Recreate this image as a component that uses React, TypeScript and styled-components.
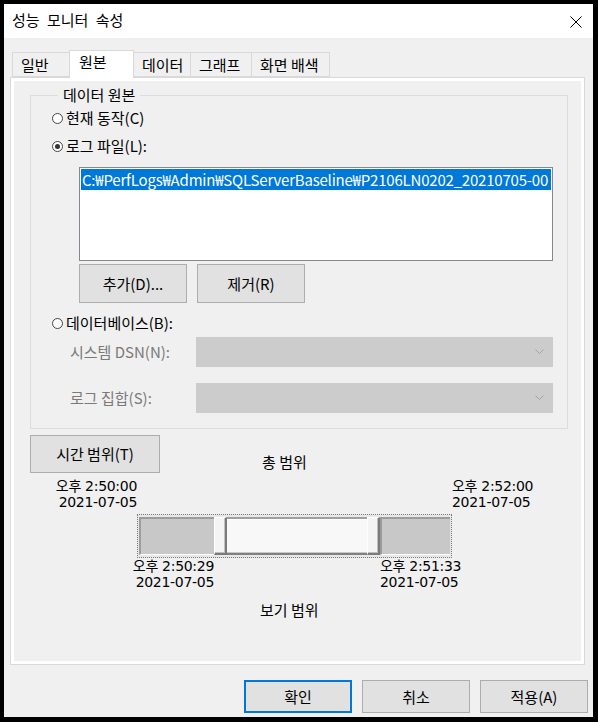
import React from "react";
import styled, { createGlobalStyle } from "styled-components";

const GlobalStyle = createGlobalStyle`
  html, body { margin: 0; padding: 0; background: #000; }
  body {
    font-family: "Noto Sans CJK KR", "Noto Sans", sans-serif;
    font-size: 15px;
    color: #000;
  }
  #root {
    box-sizing: border-box;
    width: 598px;
    height: 722px;
    padding: 4px 5px 5px 4px;
  }
  * { box-sizing: border-box; }
`;

const Window = styled.div`
  width: 589px;
  height: 713px;
  background: #f0f0f0;
  display: flex;
  flex-direction: column;
  overflow: hidden;
`;

const TitleBar = styled.div`
  height: 34px;
  background: #fff;
  display: flex;
  align-items: center;
  justify-content: space-between;
  padding: 0 11px 2px 8px;
  flex: none;
`;

const Title = styled.div`
  font-size: 15px;
  line-height: 20px;
  word-spacing: 4px;
`;

const CloseIcon = styled.svg`
  width: 12px;
  height: 12px;
  margin-top: 3px;
`;

const Content = styled.div`
  padding: 0 8px 0 6px;
  display: flex;
  flex-direction: column;
`;

const TabStrip = styled.div`
  display: flex;
  align-items: flex-end;
  height: 27px;
  margin: 12px 0 0 2px;
`;

const Tab = styled.div<{ $w: number; $selected?: boolean }>`
  width: ${(p) => p.$w}px;
  height: ${(p) => (p.$selected ? 28 : 25)}px;
  margin-bottom: ${(p) => (p.$selected ? -1 : 0)}px;
  position: relative;
  z-index: ${(p) => (p.$selected ? 2 : 1)};
  background: ${(p) => (p.$selected ? "#fff" : "#f0f0f0")};
  border: 1px solid #d9d9d9;
  border-bottom: ${(p) => (p.$selected ? "none" : "1px solid #d9d9d9")};
  margin-left: -1px;
  padding: ${(p) => (p.$selected ? "1px 0 0 9px" : "2px 0 0 8px")};
  line-height: 20px;
  font-size: 15px;
  white-space: nowrap;
  &:first-child { margin-left: 0; }
`;

const Page = styled.div`
  height: 588px;
  border: 1px solid #d9d9d9;
  box-shadow: inset 0 0 0 3px #fff;
  background: #f0f0f0;
  padding: 8px 0 0 19px;
  display: flex;
  flex-direction: column;
`;

const GroupBox = styled.fieldset`
  width: 538px;
  min-width: 0;
  margin: 0;
  border: 1px solid #dcdcdc;
  padding: 4px 14px 15px 21px;
  display: flex;
  flex-direction: column;
`;

const Legend = styled.legend`
  padding: 0 5px;
  margin-left: 6px;
  line-height: 18px;
  font-size: 15px;
`;

const RadioRow = styled.label<{ $mt: number }>`
  display: flex;
  align-items: center;
  height: 20px;
  margin-top: ${(p) => p.$mt}px;
  gap: 3px;
  line-height: 20px;
  color: #000;
`;

const RadioDot = styled.span<{ $checked?: boolean }>`
  width: 11px;
  height: 11px;
  border-radius: 50%;
  border: 1px solid #444;
  background: #fff;
  display: flex;
  align-items: center;
  justify-content: center;
  flex: none;
  &::after {
    content: "";
    width: 5px;
    height: 5px;
    border-radius: 50%;
    background: ${(p) => (p.$checked ? "#333" : "transparent")};
  }
`;

const ListBox = styled.div`
  margin: 11px 0 0 27px;
  width: 474px;
  height: 94px;
  border: 1px solid #828790;
  background: #fff;
  padding: 1px;
  overflow: hidden;
`;

const ListItem = styled.div<{ $selected?: boolean }>`
  height: 21px;
  line-height: 21px;
  padding-left: 1px;
  white-space: nowrap;
  overflow: hidden;
  letter-spacing: -0.2px;
  background: ${(p) => (p.$selected ? "#0078d7" : "transparent")};
  color: ${(p) => (p.$selected ? "#fff" : "#000")};
  font-size: 15px;
`;

const ButtonRow = styled.div`
  display: flex;
  gap: 10px;
  margin: 3px 0 0 27px;
`;

const Button = styled.button<{ $w: number; $h: number; $default?: boolean }>`
  width: ${(p) => p.$w}px;
  height: ${(p) => p.$h}px;
  background: #e1e1e1;
  border: 1px solid ${(p) => (p.$default ? "#0078d7" : "#adadad")};
  box-shadow: ${(p) => (p.$default ? "inset 0 0 0 1px #0078d7" : "none")};
  font-family: inherit;
  font-size: 15px;
  color: #000;
  padding: 0;
  line-height: 20px;
`;

const FieldRow = styled.div<{ $mt: number }>`
  display: flex;
  align-items: center;
  margin: ${(p) => p.$mt}px 0 0 18px;
  height: 30px;
`;

const FieldLabel = styled.span`
  width: 126px;
  color: #7a7a7a;
  line-height: 20px;
  white-space: nowrap;
`;

const Combo = styled.div`
  width: 357px;
  height: 30px;
  background: #cccccc;
  border: 1px solid #cccccc;
  display: flex;
  align-items: center;
  justify-content: flex-end;
  padding-right: 8px;
`;

const RangePanel = styled.div`
  display: flex;
  flex-direction: column;
  margin-top: 6px;
`;

const RangeTop = styled.div`
  display: flex;
  align-items: flex-end;
`;

const RangeText = styled.div<{ $ml?: number; $mt?: number }>`
  line-height: 20px;
  font-size: 15px;
  margin-left: ${(p) => p.$ml ?? 0}px;
  margin-top: ${(p) => p.$mt ?? 0}px;
  margin-bottom: 1px;
  white-space: nowrap;
`;

const StampRow = styled.div<{ $mt: number }>`
  display: flex;
  margin-top: ${(p) => p.$mt}px;
`;

const Stamp = styled.div<{ $align: "left" | "right"; $w?: number; $ml?: number }>`
  font-family: "DejaVu Sans", "Noto Sans CJK KR", sans-serif;
  font-size: 14px;
  line-height: 16px;
  letter-spacing: -0.3px;
  white-space: pre;
  display: flex;
  flex-direction: column;
  align-items: ${(p) => (p.$align === "right" ? "flex-end" : "flex-start")};
  ${(p) => (p.$w !== undefined ? `width: ${p.$w}px; flex: none;` : "")}
  margin-left: ${(p) => p.$ml ?? 0}px;
`;

const Bar = styled.div`
  margin: 4px 0 0 107px;
  width: 315px;
  height: 44px;
  border: 1px dotted #7a7a7a;
  padding: 2px 1px;
  background: #e8e8e8;
  display: flex;
`;

const OutSeg = styled.div`
  background: #c8c8c8;
  border-top: 2px solid #9c9c9c;
  border-left: 2px solid #9c9c9c;
  border-bottom: 1px solid #fff;
  flex: none;
`;

const Thumb = styled.div`
  width: 13px;
  background: #f4f4f4;
  border-top: 1px solid #fff;
  border-left: 1px solid #fff;
  border-right: 2px solid #7a7a7a;
  border-bottom: 2px solid #7a7a7a;
  box-shadow: inset -1px -1px 0 #c0c0c0;
  flex: none;
`;

const InSeg = styled.div`
  background: #f8f8f8;
  border-top: 2px solid #a0a0a0;
  border-bottom: 2px solid #808080;
  box-shadow: inset 0 1px 0 #fff, inset 0 -1px 0 #c8c8c8;
  flex: none;
`;

const Footer = styled.div`
  display: flex;
  justify-content: flex-end;
  gap: 10px;
  padding: 15px 5px 0 0;
`;

const Radio = ({ label, checked, mt }: { label: string; checked?: boolean; mt: number }) => (
  <RadioRow $mt={mt}>
    <RadioDot $checked={checked} />
    {label}
  </RadioRow>
);

const Chevron = () => (
  <svg width="9" height="6" viewBox="0 0 9 6">
    <polyline points="0.5,0.5 4.5,4.5 8.5,0.5" fill="none" stroke="#a4a4a4" strokeWidth="1" />
  </svg>
);

const tabs = [
  { label: "일반", w: 58 },
  { label: "원본", w: 65, selected: true },
  { label: "데이터", w: 58 },
  { label: "그래프", w: 62 },
  { label: "화면 배색", w: 79 },
];

export default function App() {
  const totalSec = 120;
  const startSec = 29;
  const endSec = 93;
  const track = 311;
  const thumb = 13;
  const leftPx = Math.round((startSec / totalSec) * track);
  const rightPx = Math.round((endSec / totalSec) * track);
  const leftGray = leftPx;
  const rightGray = track - rightPx;
  const middle = rightPx - thumb - (leftPx + thumb);
  const barLeft = 107 + 2;

  return (
    <>
      <GlobalStyle />
      <Window>
        <TitleBar>
          <Title>성능 모니터 속성</Title>
          <CloseIcon viewBox="0 0 12 12">
            <path d="M0.5 0.5 L11.5 11.5 M11.5 0.5 L0.5 11.5" stroke="#000" strokeWidth="1" fill="none" />
          </CloseIcon>
        </TitleBar>
        <Content>
          <TabStrip>
            {tabs.map((t) => (
              <Tab key={t.label} $w={t.w} $selected={t.selected}>
                {t.label}
              </Tab>
            ))}
          </TabStrip>
          <Page>
            <GroupBox>
              <Legend>데이터 원본</Legend>
              <Radio label="현재 동작(C)" mt={0} />
              <Radio label="로그 파일(L):" checked mt={8} />
              <ListBox>
                <ListItem $selected>
                  C:₩PerfLogs₩Admin₩SQLServerBaseline₩P2106LN0202_20210705-00
                </ListItem>
              </ListBox>
              <ButtonRow>
                <Button $w={108} $h={39}>추가(D)...</Button>
                <Button $w={108} $h={39}>제거(R)</Button>
              </ButtonRow>
              <Radio label="데이터베이스(B):" mt={10} />
              <FieldRow $mt={4}>
                <FieldLabel>시스템 DSN(N):</FieldLabel>
                <Combo>
                  <Chevron />
                </Combo>
              </FieldRow>
              <FieldRow $mt={16}>
                <FieldLabel>로그 집합(S):</FieldLabel>
                <Combo>
                  <Chevron />
                </Combo>
              </FieldRow>
            </GroupBox>
            <RangePanel>
              <RangeTop>
                <Button $w={130} $h={38}>시간 범위(T)</Button>
                <RangeText $ml={102}>총 범위</RangeText>
              </RangeTop>
              <StampRow $mt={5}>
                <Stamp $align="right" $w={107}>
                  <span>오후 2:50:00</span>
                  <span>2021-07-05</span>
                </Stamp>
                <Stamp $align="left" $ml={315}>
                  <span>오후 2:52:00</span>
                  <span>2021-07-05</span>
                </Stamp>
              </StampRow>
              <Bar>
                <OutSeg style={{ width: leftGray }} />
                <Thumb />
                <InSeg style={{ width: middle }} />
                <Thumb />
                <OutSeg style={{ width: rightGray }} />
              </Bar>
              <StampRow $mt={0}>
                <Stamp $align="right" style={{ width: barLeft + leftPx }}>
                  <span>오후 2:50:29</span>
                  <span>2021-07-05</span>
                </Stamp>
                <Stamp $align="left" style={{ marginLeft: rightPx - leftPx }}>
                  <span>오후 2:51:33</span>
                  <span>2021-07-05</span>
                </Stamp>
              </StampRow>
              <RangeText $ml={230} $mt={10}>보기 범위</RangeText>
            </RangePanel>
          </Page>
        </Content>
        <Footer>
          <Button $w={108} $h={33} $default>확인</Button>
          <Button $w={108} $h={33}>취소</Button>
          <Button $w={108} $h={33}>적용(A)</Button>
        </Footer>
      </Window>
    </>
  );
}
